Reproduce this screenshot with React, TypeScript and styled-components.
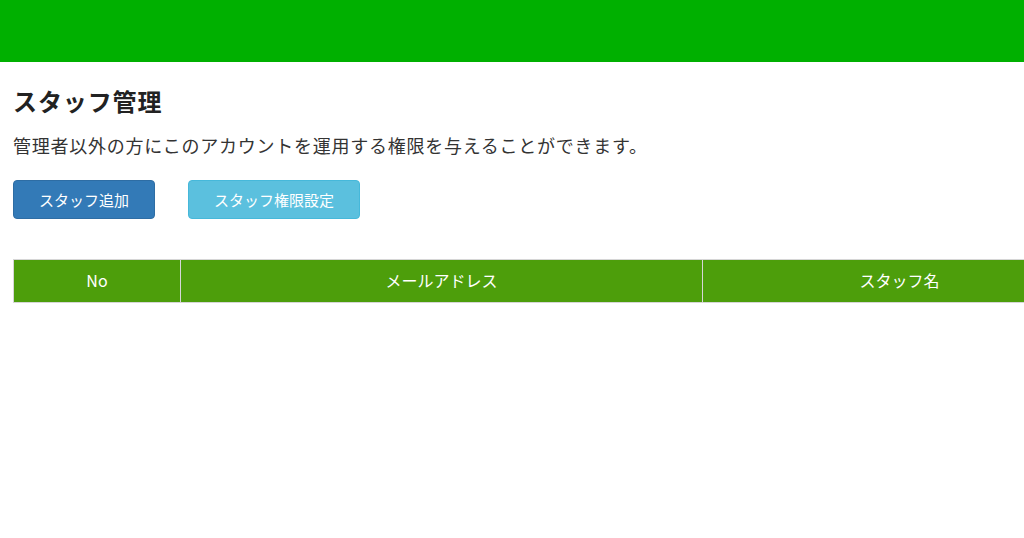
import styled, { createGlobalStyle } from "styled-components";

const GlobalStyle = createGlobalStyle`
  body {
    margin: 0;
    background: #fff;
    font-family: "Noto Sans CJK JP", "Noto Sans", sans-serif;
    color: #333;
    overflow: hidden;
  }
`;

const columns = [
  { label: "No", width: 167 },
  { label: "メールアドレス", width: 522 },
  { label: "スタッフ名", width: 394 },
];

export default function App() {
  return (
    <>
      <GlobalStyle />
      <TopBar />
      <Main>
        <Title>スタッフ管理</Title>
        <Lead>管理者以外の方にこのアカウントを運用する権限を与えることができます。</Lead>
        <Actions>
          <Button $variant="primary">スタッフ追加</Button>
          <Button $variant="info">スタッフ権限設定</Button>
        </Actions>
        <Table>
          <colgroup>
            {columns.map((c) => (
              <col key={c.label} style={{ width: c.width }} />
            ))}
          </colgroup>
          <thead>
            <tr>
              {columns.map((c) => (
                <Th key={c.label}>{c.label}</Th>
              ))}
            </tr>
          </thead>
        </Table>
      </Main>
    </>
  );
}

const TopBar = styled.header`
  height: 62px;
  background-color: #00b000;
`;

const Main = styled.main`
  padding: 24px 0 0 13px;
`;

const Title = styled.h1`
  margin: 0;
  font-size: 24px;
  font-weight: 700;
  line-height: 30px;
  letter-spacing: 0.9px;
  color: #222;
`;

const Lead = styled.p`
  margin: 16px 0 0;
  font-size: 18px;
  line-height: 26px;
  letter-spacing: 0.75px;
  color: #333;
`;

const Actions = styled.div`
  display: flex;
  gap: 33px;
  margin-top: 22px;
`;

const Button = styled.button<{ $variant: "primary" | "info" }>`
  height: 39px;
  padding: 0 25px;
  border: 1px solid
    ${(p) => (p.$variant === "primary" ? "#2e6da4" : "#46b8da")};
  border-radius: 4px;
  background-color: ${(p) => (p.$variant === "primary" ? "#337ab7" : "#5bc0de")};
  color: #fff;
  font-family: inherit;
  font-size: 15px;
  cursor: pointer;
`;

const Table = styled.table`
  margin-top: 40px;
  border-collapse: collapse;
  table-layout: fixed;
  width: 1083px;
`;

const Th = styled.th`
  box-sizing: border-box;
  height: 43px;
  padding: 0 8px 2px;
  background-color: #4d9e0b;
  border: 1px solid #d6d6d6;
  color: #fff;
  font-size: 16px;
  font-weight: 400;
  text-align: center;
`;
